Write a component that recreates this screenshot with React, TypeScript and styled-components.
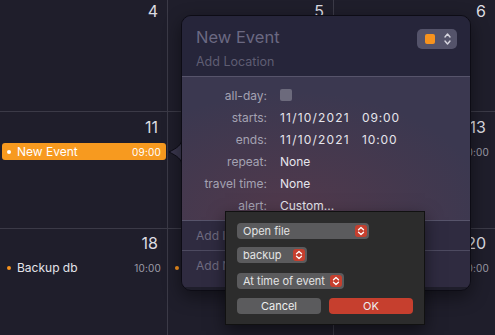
import styled, { createGlobalStyle } from 'styled-components'

const GlobalStyle = createGlobalStyle`
  html, body {
    margin: 0;
    padding: 0;
    background: #1f1e2b;
  }
  body {
    font-family: Inter, "Noto Sans", sans-serif;
    -webkit-font-smoothing: antialiased;
  }
`

const Page = styled.div`
  position: relative;
  width: 495px;
  height: 335px;
  overflow: hidden;
`

const Grid = styled.div`
  display: grid;
  grid-template-columns: 167px 165px 1fr;
  grid-template-rows: 111px 116px 1fr;
  gap: 1px;
  height: 100%;
  background: #3b3a47;
`

const Cell = styled.div<{ $top: number }>`
  display: flex;
  flex-direction: column;
  padding-top: ${({ $top }) => $top}px;
  background: #1f1e2b;
  overflow: hidden;
`

const DayNum = styled.div`
  height: 20px;
  padding-right: 9px;
  text-align: right;
  font-size: 16px;
  line-height: 20px;
  color: #dcdce1;
`

const EventRow = styled.div<{ $selected?: boolean }>`
  display: flex;
  align-items: center;
  height: 17px;
  margin: 6px 1px 0 2px;
  padding: 0 5px;
  border-radius: 3px;
  background: ${({ $selected }) => ($selected ? '#f79a1f' : 'transparent')};
  white-space: nowrap;
`

const Dot = styled.span<{ $selected?: boolean }>`
  flex: none;
  width: 4px;
  height: 4px;
  margin-right: 6px;
  border-radius: 50%;
  background: ${({ $selected }) => ($selected ? '#ffffff' : '#f7931e')};
`

const EventTitle = styled.span<{ $selected?: boolean }>`
  font-size: 12px;
  color: ${({ $selected }) => ($selected ? '#ffffff' : '#e4e4ea')};
`

const EventTime = styled.span<{ $selected?: boolean }>`
  margin-left: auto;
  font-size: 10px;
  letter-spacing: 0.2px;
  color: ${({ $selected }) => ($selected ? '#ffffff' : '#9d9ca8')};
`

const Popover = styled.div`
  position: absolute;
  left: 181px;
  top: 15px;
  width: 290px;
  height: 276px;
  box-sizing: border-box;
  display: flex;
  flex-direction: column;
  border: 1px solid #0d0c15;
  border-radius: 10px;
  overflow: hidden;
  box-shadow: 0 6px 18px rgba(0, 0, 0, 0.45);
`

const Arrow = styled.svg`
  position: absolute;
  left: 168px;
  top: 138px;
`

const Header = styled.div`
  position: relative;
  display: flex;
  flex-direction: column;
  height: 61px;
  box-sizing: border-box;
  padding: 10px 14px 0;
  background: #26253a;
  border-bottom: 1px solid #57546b;
`

const Title = styled.div`
  font-size: 16.5px;
  line-height: 22px;
  color: #6b6982;
`

const Location = styled.div`
  margin-top: 6px;
  font-size: 12.5px;
  line-height: 16px;
  color: #5f5d73;
`

const ColorPicker = styled.div`
  position: absolute;
  right: 13px;
  top: 13px;
  display: flex;
  align-items: center;
  gap: 9px;
  width: 40px;
  height: 20px;
  box-sizing: border-box;
  padding-left: 8px;
  border-radius: 5px;
  background: #54536a;
`

const Swatch = styled.span`
  width: 10px;
  height: 10px;
  border-radius: 2px;
  background: #f7931e;
`

const Body = styled.div`
  display: grid;
  grid-template-columns: 85px 1fr;
  grid-auto-rows: 22px;
  column-gap: 13px;
  align-items: center;
  height: 144px;
  box-sizing: border-box;
  padding: 7px 0 5px;
  background:
    radial-gradient(ellipse 70% 90% at 38% 100%, rgba(98, 58, 72, 0.6) 0%, rgba(98, 58, 72, 0) 100%),
    #3b3850;
  border-bottom: 1px solid #57546b;
`

const Label = styled.div`
  text-align: right;
  font-size: 12px;
  color: #a4a2b2;
  white-space: nowrap;
`

const Value = styled.div`
  display: flex;
  gap: 12px;
  font-size: 12px;
  color: #e6e5ec;
  white-space: nowrap;
`

const Stamp = styled.span<{ $spacing: number }>`
  letter-spacing: ${({ $spacing }) => $spacing}px;
`

const Checkbox = styled.span`
  width: 12px;
  height: 12px;
  border-radius: 2px;
  background: #6c6a7c;
`

const AddRow = styled.div<{ $last?: boolean }>`
  display: flex;
  align-items: ${({ $last }) => ($last ? 'flex-start' : 'center')};
  height: ${({ $last }) => ($last ? '36px' : '30px')};
  box-sizing: border-box;
  padding: ${({ $last }) => ($last ? '7px 14px 0' : '0 14px')};
  background: #2f2b40;
  border-bottom: ${({ $last }) => ($last ? 'none' : '1px solid #4d4a60')};
  font-size: 12px;
  line-height: 16px;
  color: #6f6c81;
  white-space: nowrap;
`

const AlertMenu = styled.div`
  position: absolute;
  left: 225px;
  top: 211px;
  width: 200px;
  height: 114px;
  box-sizing: border-box;
  display: flex;
  flex-direction: column;
  align-items: flex-start;
  padding: 11px 11px 0;
  background: #2c2c2c;
  border: 1px solid #111111;
  box-shadow: 0 6px 16px rgba(0, 0, 0, 0.5);
`

const PopUp = styled.div<{ $width: number; $gap: number }>`
  position: relative;
  width: ${({ $width }) => $width}px;
  height: 16px;
  margin-top: ${({ $gap }) => $gap}px;
  box-sizing: border-box;
  padding-left: 6px;
  border-radius: 4px;
  background: #5b5b5d;
  font-size: 11px;
  line-height: 16px;
  color: #e4e4e4;
  white-space: nowrap;
`

const Stepper = styled.span`
  position: absolute;
  right: 2px;
  top: 2px;
  display: flex;
  align-items: center;
  justify-content: center;
  width: 12px;
  height: 12px;
  border-radius: 3px;
  background: #c63f2e;
`

const Buttons = styled.div`
  display: flex;
  gap: 8px;
  margin-top: 9px;
`

const PushButton = styled.div<{ $primary?: boolean }>`
  width: 84px;
  height: 16px;
  border-radius: 4px;
  background: ${({ $primary }) => ($primary ? '#c63f2e' : '#5b5b5d')};
  text-align: center;
  font-size: 11px;
  line-height: 16px;
  color: #eeeeee;
`

type Ev = { title: string; time: string; selected?: boolean }

const cells: { day: number; top: number; events: Ev[] }[] = [
  { day: 4, top: 1, events: [] },
  { day: 5, top: 1, events: [] },
  { day: 6, top: 1, events: [] },
  { day: 11, top: 5, events: [{ title: 'New Event', time: '09:00', selected: true }] },
  { day: 12, top: 5, events: [] },
  { day: 13, top: 5, events: [{ title: 'Backup db', time: '10:00' }] },
  { day: 18, top: 4, events: [{ title: 'Backup db', time: '10:00' }] },
  { day: 19, top: 4, events: [{ title: 'Backup db', time: '10:00' }] },
  { day: 20, top: 4, events: [{ title: 'Backup db', time: '10:00' }] },
]

const details: [string, React.ReactNode][] = [
  ['all-day:', <Checkbox />],
  ['starts:', <><Stamp $spacing={1.2}>11/10/2021</Stamp><Stamp $spacing={0.9}>09:00</Stamp></>],
  ['ends:', <><Stamp $spacing={1.2}>11/10/2021</Stamp><Stamp $spacing={0.9}>10:00</Stamp></>],
  ['repeat:', 'None'],
  ['travel time:', 'None'],
  ['alert:', 'Custom...'],
]

const StepperIcon = () => (
  <svg width="8" height="10" viewBox="0 0 8 10" fill="none" stroke="#ffffff" strokeWidth="1.3" strokeLinecap="round" strokeLinejoin="round">
    <path d="M1.5 3.8 L4 1.5 L6.5 3.8" />
    <path d="M1.5 6.2 L4 8.5 L6.5 6.2" />
  </svg>
)

export default function App() {
  return (
    <Page>
      <GlobalStyle />
      <Grid>
        {cells.map((c) => (
          <Cell key={c.day} $top={c.top}>
            <DayNum>{c.day}</DayNum>
            {c.events.map((e) => (
              <EventRow key={e.title} $selected={e.selected}>
                <Dot $selected={e.selected} />
                <EventTitle $selected={e.selected}>{e.title}</EventTitle>
                <EventTime $selected={e.selected}>{e.time}</EventTime>
              </EventRow>
            ))}
          </Cell>
        ))}
      </Grid>

      <Arrow width="14" height="28" viewBox="0 0 14 28">
        <path d="M14 0 C14 7 9 10 1 14 C9 18 14 21 14 28 Z" fill="#3a374e" stroke="#0d0c15" strokeWidth="1" />
        <rect x="13" y="0" width="1" height="28" fill="#3a374e" />
      </Arrow>

      <Popover>
        <Header>
          <Title>New Event</Title>
          <Location>Add Location</Location>
          <ColorPicker>
            <Swatch />
            <svg width="7" height="14" viewBox="0 0 7 14" fill="none" stroke="#d6d5de" strokeWidth="1.4" strokeLinecap="round" strokeLinejoin="round">
              <path d="M1 5 L3.5 2 L6 5" />
              <path d="M1 9 L3.5 12 L6 9" />
            </svg>
          </ColorPicker>
        </Header>
        <Body>
          {details.map(([label, value]) => (
            <>
              <Label key={label}>{label}</Label>
              <Value>{value}</Value>
            </>
          ))}
        </Body>
        <AddRow>Add Invitees</AddRow>
        <AddRow $last>Add Notes, URL, or Attachments</AddRow>
      </Popover>

      <AlertMenu>
        <PopUp $width={132} $gap={0}>
          Open file
          <Stepper><StepperIcon /></Stepper>
        </PopUp>
        <PopUp $width={70} $gap={8}>
          backup
          <Stepper><StepperIcon /></Stepper>
        </PopUp>
        <PopUp $width={107} $gap={10}>
          At time of event
          <Stepper><StepperIcon /></Stepper>
        </PopUp>
        <Buttons>
          <PushButton>Cancel</PushButton>
          <PushButton $primary>OK</PushButton>
        </Buttons>
      </AlertMenu>
    </Page>
  )
}
